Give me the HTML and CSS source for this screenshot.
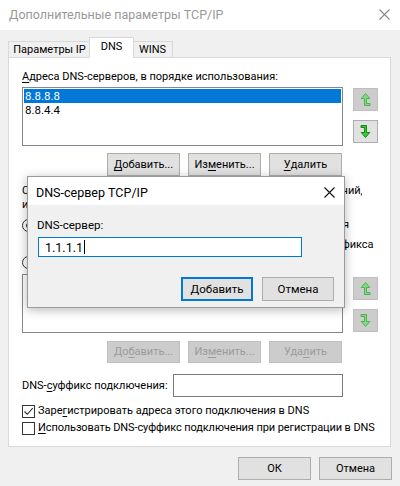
FILE: index.html
```html
<!DOCTYPE html>
<html lang="ru">
<head>
<meta charset="utf-8">
<title>Дополнительные параметры TCP/IP</title>
<link rel="stylesheet" href="styles.css">
</head>
<body>
<div class="window">
  <div class="titlebar">
    <span class="title">Дополнительные параметры TCP/IP</span>
    <svg class="close" width="11" height="11" viewBox="0 0 11 11"><path d="M0.5 0.5 L10.5 10.5 M10.5 0.5 L0.5 10.5" stroke="#8a8a8a" stroke-width="1.1" fill="none"/></svg>
  </div>
  <div class="main">
    <div class="tabs">
      <div class="tab t1">Параметры IP</div>
      <div class="tab active">DNS</div>
      <div class="tab t3">WINS</div>
    </div>
    <div class="panel">
      <div class="sec-label"><u>А</u>дреса DNS-серверов, в порядке использования:</div>
      <div class="listrow">
        <div class="listbox">
          <div class="item sel">8.8.8.8</div>
          <div class="item">8.8.4.4</div>
        </div>
        <div class="arrows a1">
          <div class="arrbtn dis">
            <svg width="11" height="15" viewBox="0 0 11 15"><path class="arr-off" transform="rotate(180 5.5 7.5)" d="M1 1.5 H6.5 V8.5 H9.8 L5.5 13.5 L1.2 8.5 H4.5 V3.5 H1 Z"/></svg>
          </div>
          <div class="arrbtn">
            <svg width="11" height="15" viewBox="0 0 11 15"><path class="arr-on" d="M1 1.5 H6.5 V8.5 H9.8 L5.5 13.5 L1.2 8.5 H4.5 V3.5 H1 Z"/></svg>
          </div>
        </div>
      </div>
      <div class="btnrow">
        <div class="btn"><u>Д</u>обавить...</div>
        <div class="btn">Из<u>м</u>енить...</div>
        <div class="btn"><u>У</u>далить</div>
      </div>
      <div class="para">
        <div class="jline"><span>Следующие три параметра используются для всех</span><span>подключений,</span></div>
        <div class="line">использующих TCP/IP. Для разрешения неполных имен:</div>
      </div>
      <div class="opt r1">
        <span class="radio on"></span>
        <span class="rtext">Добавлять основной DNS-суффикс и суффикс подключения</span>
      </div>
      <div class="opt c-sub">
        <span class="cbox"></span>
        <span class="rtext">Добавлять родительские суффиксы основного DNS-суффикса</span>
      </div>
      <div class="opt r2">
        <span class="radio"></span>
        <span class="otext">Добавлять следующие DNS-суффиксы (по порядку):</span>
      </div>
      <div class="listrow l2">
        <div class="listbox"></div>
        <div class="arrows a2">
          <div class="arrbtn dis">
            <svg width="11" height="15" viewBox="0 0 11 15"><path class="arr-off" transform="rotate(180 5.5 7.5)" d="M1 1.5 H6.5 V8.5 H9.8 L5.5 13.5 L1.2 8.5 H4.5 V3.5 H1 Z"/></svg>
          </div>
          <div class="arrbtn dis">
            <svg width="11" height="15" viewBox="0 0 11 15"><path class="arr-off" d="M1 1.5 H6.5 V8.5 H9.8 L5.5 13.5 L1.2 8.5 H4.5 V3.5 H1 Z"/></svg>
          </div>
        </div>
      </div>
      <div class="btnrow b2">
        <div class="btn dis">До<u>б</u>авить...</div>
        <div class="btn dis">Из<u>м</u>енить...</div>
        <div class="btn dis">Уда<u>л</u>ить</div>
      </div>
      <div class="suffix">
        <span class="suf-label">DNS-<u>с</u>уффикс подключения:</span>
        <div class="edit"></div>
      </div>
      <div class="opt ck1">
        <span class="cbox">
          <svg width="11" height="11" viewBox="0 0 11 11"><path d="M1.5 5.5 L4.3 8.3 L9.8 2" stroke="#222" stroke-width="1.1" fill="none"/></svg>
        </span>
        <span class="otext">Заре<u>г</u>истрировать адреса этого подключения в DNS</span>
      </div>
      <div class="opt ck2">
        <span class="cbox"></span>
        <span class="otext"><u>И</u>спользовать DNS-суффикс подключения при регистрации в DNS</span>
      </div>
    </div>
    <div class="footer">
      <div class="btn">ОК</div>
      <div class="btn">Отмена</div>
    </div>
  </div>

  <div class="dialog">
    <div class="dlg-title">
      <span>DNS-сервер TCP/IP</span>
      <svg width="11" height="11" viewBox="0 0 11 11"><path d="M0.5 0.5 L10.5 10.5 M10.5 0.5 L0.5 10.5" stroke="#111" stroke-width="1.1" fill="none"/></svg>
    </div>
    <div class="dlg-body">
      <div class="dlg-label">DNS-сервер:</div>
      <div class="dlg-edit"><span>1.1.1.1</span><span class="caret"></span></div>
      <div class="dlg-btns">
        <div class="btn def">Добавить</div>
        <div class="btn">Отмена</div>
      </div>
    </div>
  </div>
</div>
</body>
</html>
```

FILE: styles.css
```css
* { box-sizing: border-box; }
html, body { margin: 0; padding: 0; }
body {
  width: 400px;
  height: 486px;
  overflow: hidden;
  font-family: Roboto, "Noto Sans", "Liberation Sans", sans-serif;
  font-size: 11px;
  color: #000;
  background: #f0f0f0;
}
u { text-decoration: underline; text-underline-offset: 2px; text-decoration-thickness: 1px; }

.window { position: relative; width: 400px; height: 486px; background: #f0f0f0; }

.titlebar {
  height: 30px;
  background: #fff;
  display: flex;
  align-items: center;
  justify-content: space-between;
  padding: 0 10px 1px 9px;
}
.title { color: #999; font-size: 12.5px; white-space: nowrap; }

.main { padding: 7px 8px 0 8px; }

.tabs { display: flex; align-items: flex-end; height: 20px; }
.tab {
  height: 16px;
  border: 1px solid #d9d9d9;
  border-bottom: none;
  background: #f0f0f0;
  line-height: 15px;
  text-align: center;
  white-space: nowrap;
}
.t1 { width: 83px; }
.t3 { width: 41px; }
.tab.active {
  position: relative;
  z-index: 2;
  width: 45px;
  height: 21px;
  margin: 0 -2px -1px -2px;
  background: #fff;
  line-height: 14px;
  padding-top: 2px;
}

.panel {
  width: 383px;
  height: 390px;
  background: #fff;
  border: 1px solid #d9d9d9;
  padding-left: 13px;
}

.sec-label { margin-top: 12px; height: 14px; line-height: 14px; white-space: nowrap; }

.listrow { display: flex; margin-top: 3px; }
.listbox {
  width: 321px;
  height: 59px;
  border: 1px solid #828790;
  background: #fff;
  padding: 1px;
}
.item { height: 14px; line-height: 14px; padding-left: 1px; font-size: 11.5px; }
.item.sel { background: #0078d7; color: #fff; }

.arrows { margin-left: 10px; display: flex; flex-direction: column; gap: 9px; }
.a1 { padding-top: 1px; }
.a2 { padding-top: 3px; }
.arrbtn {
  width: 25px;
  height: 23px;
  border: 1px solid #adadad;
  background: #e1e1e1;
  display: flex;
  align-items: center;
  justify-content: center;
}
.arrbtn.dis { background: #cccccc; border-color: #bfbfbf; }
.arr-on { fill: #2fd42f; stroke: #0a7a0a; stroke-width: 0.9; stroke-linejoin: miter; }
.arr-off { fill: #7fdc7f; stroke: #3fa63f; stroke-width: 0.8; stroke-linejoin: miter; }

.btnrow { display: flex; justify-content: flex-end; gap: 8px; width: 320px; margin-top: 7px; }
.btn {
  width: 73px;
  height: 23px;
  border: 1px solid #adadad;
  background: #e1e1e1;
  display: flex;
  align-items: center;
  justify-content: center;
  white-space: nowrap;
  padding-bottom: 1px;
}
.btn.dis { background: #cccccc; border-color: #bfbfbf; color: #9b9b9b; }
.b2 { margin-top: 8px; }
.b2 .btn { height: 22px; }

.para { margin-top: 8px; width: 340px; }
.line { height: 14px; line-height: 14px; white-space: nowrap; overflow: hidden; }
.jline {
  display: flex;
  justify-content: space-between;
  gap: 3px;
  height: 14px;
  line-height: 14px;
  white-space: nowrap;
  overflow: hidden;
}

.opt { display: flex; align-items: center; height: 14px; line-height: 14px; white-space: nowrap; }
.r1 { margin-top: 6px; width: 327px; }
.c-sub { margin-top: 6px; margin-left: 16px; width: 335px; }
.r2 { margin-top: 3px; }
.ck1 { margin-top: 7px; }
.ck2 { margin-top: 3px; letter-spacing: -0.1px; }
.otext { margin-left: 3px; }
.rtext { margin-left: auto; }

.radio {
  flex: none;
  width: 13px;
  height: 13px;
  border: 1px solid #333;
  border-radius: 50%;
  background: #fff;
  display: flex;
  align-items: center;
  justify-content: center;
}
.radio.on::after { content: ""; width: 5px; height: 5px; border-radius: 50%; background: #333; }

.cbox {
  flex: none;
  width: 13px;
  height: 13px;
  border: 1px solid #333;
  background: #fff;
  display: flex;
  align-items: center;
  justify-content: center;
}

.l2 { margin-top: 5px; }

.suffix { display: flex; align-items: center; margin-top: 11px; height: 23px; }
.suf-label { width: 151px; flex: none; white-space: nowrap; }
.edit { width: 170px; height: 23px; border: 1px solid #7a7a7a; background: #fff; }

.footer { display: flex; justify-content: flex-end; gap: 8px; margin-top: 10px; }

.dialog {
  position: absolute;
  left: 27px;
  top: 176px;
  width: 318px;
  height: 132px;
  background: #f0f0f0;
  border: 1px solid #9a9a9a;
  box-shadow: 0 2px 10px rgba(0, 0, 0, 0.28);
  z-index: 5;
}
.dlg-title {
  height: 28px;
  background: #fff;
  display: flex;
  align-items: center;
  justify-content: space-between;
  padding: 2px 9px 0 8px;
  font-size: 12.5px;
}
.dlg-body { padding: 0 10px 0 9px; }
.dlg-label { margin-top: 13px; height: 14px; line-height: 14px; font-size: 11.5px; }
.dlg-edit {
  margin: 5px 0 0 1px;
  width: 264px;
  height: 20px;
  border: 1px solid #0078d7;
  background: #fff;
  display: flex;
  align-items: center;
  padding-left: 6px;
  font-size: 12.5px;
}
.caret { display: inline-block; width: 1px; height: 14px; background: #000; margin-left: 1px; }
.dlg-btns { display: flex; justify-content: flex-end; gap: 9px; margin-top: 20px; }
.dlg-btns .btn { width: 72px; height: 24px; font-size: 11.5px; }
.btn.def { border-color: #0078d7; box-shadow: inset 0 0 0 1px #0078d7; }
```
